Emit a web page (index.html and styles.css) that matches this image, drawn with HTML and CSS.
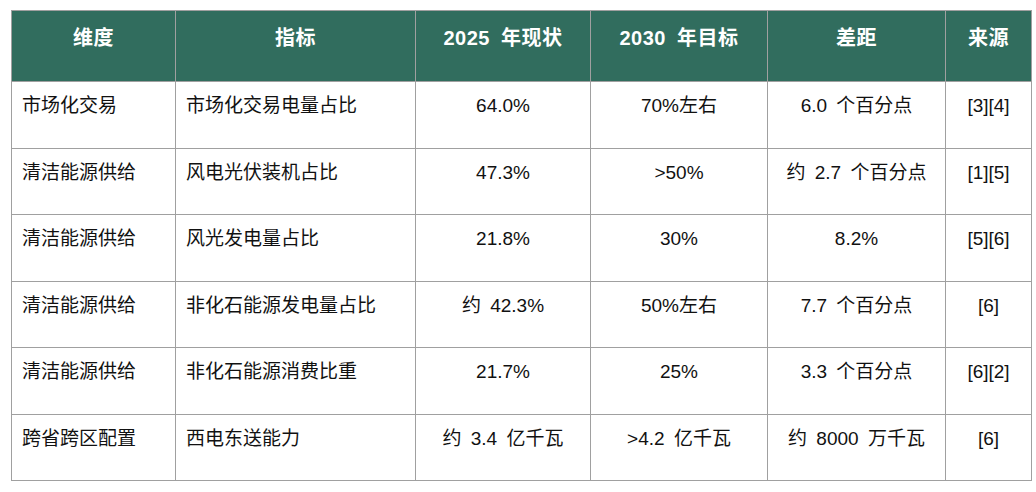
FILE: index.html
```html
<!DOCTYPE html>
<html lang="zh">
<head>
<meta charset="utf-8">
<link rel="stylesheet" href="styles.css">
</head>
<body>
<table class="data">
  <colgroup>
    <col class="c1"><col class="c2"><col class="c3"><col class="c4"><col class="c5"><col class="c6">
  </colgroup>
  <thead>
    <tr>
      <th>维度</th><th>指标</th><th>2025 年现状</th><th>2030 年目标</th><th>差距</th><th>来源</th>
    </tr>
  </thead>
  <tbody>
    <tr><td>市场化交易</td><td>市场化交易电量占比</td><td class="ctr">64.0%</td><td class="ctr">70%左右</td><td class="ctr">6.0 个百分点</td><td class="ctr">[3][4]</td></tr>
    <tr><td>清洁能源供给</td><td>风电光伏装机占比</td><td class="ctr">47.3%</td><td class="ctr">&gt;50%</td><td class="ctr">约 2.7 个百分点</td><td class="ctr">[1][5]</td></tr>
    <tr><td>清洁能源供给</td><td>风光发电量占比</td><td class="ctr">21.8%</td><td class="ctr">30%</td><td class="ctr">8.2%</td><td class="ctr">[5][6]</td></tr>
    <tr><td>清洁能源供给</td><td>非化石能源发电量占比</td><td class="ctr">约 42.3%</td><td class="ctr">50%左右</td><td class="ctr">7.7 个百分点</td><td class="ctr">[6]</td></tr>
    <tr><td>清洁能源供给</td><td>非化石能源消费比重</td><td class="ctr">21.7%</td><td class="ctr">25%</td><td class="ctr">3.3 个百分点</td><td class="ctr">[6][2]</td></tr>
    <tr><td>跨省跨区配置</td><td>西电东送能力</td><td class="ctr">约 3.4 亿千瓦</td><td class="ctr">&gt;4.2 亿千瓦</td><td class="ctr">约 8000 万千瓦</td><td class="ctr">[6]</td></tr>
  </tbody>
</table>
</body>
</html>
```
FILE: styles.css
```css
html, body {
  margin: 0;
  padding: 0;
  background: #ffffff;
}
body {
  padding: 10px 0 0 11px;
  font-family: "Liberation Sans", "Noto Sans CJK SC", sans-serif;
  font-size: 19px;
  color: #111111;
}
.data {
  border-collapse: collapse;
  table-layout: fixed;
  width: 1020px;
}
.c1 { width: 164px; }
.c2 { width: 240px; }
.c3 { width: 175px; }
.c4 { width: 177px; }
.c5 { width: 178px; }
.c6 { width: 86px; }
.data th, .data td {
  border: 1px solid #a0a0a0;
  vertical-align: top;
  line-height: 26px;
}
.data th {
  background: #316d5e;
  color: #ffffff;
  font-weight: bold;
  height: 71px;
  box-sizing: border-box;
  padding: 14px 6px 0;
  text-align: center;
  font-size: 20px;
  letter-spacing: 0.5px;
  word-spacing: 5px;
}
.data td {
  height: 66.5px;
  box-sizing: border-box;
  padding: 11px 10px 0 10px;
  text-align: left;
  word-spacing: 4px;
}
.data td.ctr {
  text-align: center;
}
```
